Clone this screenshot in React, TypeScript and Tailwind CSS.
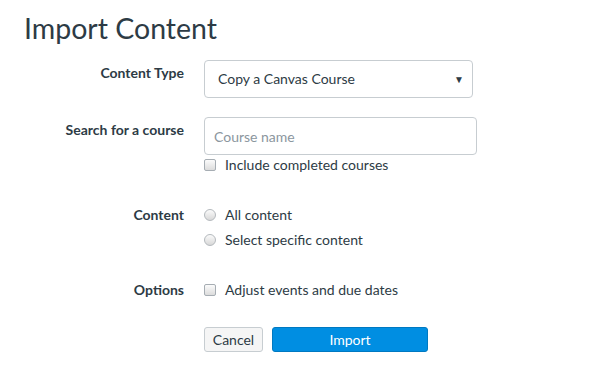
import { useState } from 'react';

function Checkbox() {
  return (
    <span className="w-3 h-3 shrink-0 rounded-[2px] border border-[#a6adb3] bg-gradient-to-b from-[#fbfbfb] to-[#dcdcdc]" />
  );
}

function Radio() {
  return (
    <span className="w-3 h-3 shrink-0 rounded-full border border-[#b4b9bd] bg-gradient-to-b from-[#fbfbfb] to-[#d8d8d8]" />
  );
}

export default function App() {
  const [course, setCourse] = useState('');

  return (
    <div className="w-[607px] h-[384px] bg-white text-[#2d3b45] font-['Lato','Liberation_Sans',sans-serif] overflow-hidden">
      <h1 className="pl-6 pt-[11px] text-[28.5px] leading-[34px] font-normal">Import Content</h1>

      <div className="mt-[15px] grid grid-cols-[184px_1fr] gap-x-5 text-sm">
        {/* content type */}
        <div className="pt-[3px] leading-5 font-bold text-right">Content Type</div>
        <div className="w-[269px] h-[38px] rounded-[4px] border border-[#c7cdd1] flex items-center justify-between pl-[13px] pr-[8px]">
          <span>Copy a Canvas Course</span>
          <span className="text-[10px] leading-none text-[#2d3b45]">▼</span>
        </div>

        {/* search */}
        <div className="mt-[19px] pt-[3px] leading-5 font-bold text-right">Search for a course</div>
        <div className="mt-[19px]">
          <input
            value={course}
            onChange={(e) => setCourse(e.target.value)}
            placeholder="Course name"
            className="w-[273px] h-[38px] rounded-[4px] border border-[#c7cdd1] px-[9px] outline-none placeholder:text-[#8b969e]"
          />
          <label className="flex items-center gap-[9px] leading-5">
            <Checkbox />
            <span>Include completed courses</span>
          </label>
        </div>

        {/* content */}
        <div className="mt-[30px] leading-5 font-bold text-right">Content</div>
        <div className="mt-[30px] flex flex-col gap-[5px]">
          <label className="flex items-center gap-[9px] leading-5">
            <Radio />
            <span>All content</span>
          </label>
          <label className="flex items-center gap-[9px] leading-5">
            <Radio />
            <span>Select specific content</span>
          </label>
        </div>

        {/* options */}
        <div className="mt-[30px] leading-5 font-bold text-right">Options</div>
        <label className="mt-[30px] flex items-center gap-[9px] leading-5">
          <Checkbox />
          <span>Adjust events and due dates</span>
        </label>

        {/* buttons */}
        <div />
        <div className="mt-[27px] flex gap-[9px]">
          <button className="w-[59px] h-[25px] rounded-[3px] border border-[#c7cdd1] bg-[#f5f5f5] text-[#2d3b45] text-sm">
            Cancel
          </button>
          <button className="w-[156px] h-[25px] rounded-[3px] border border-[#0079c1] bg-[#008ee2] text-white text-sm">
            Import
          </button>
        </div>
      </div>
    </div>
  );
}
